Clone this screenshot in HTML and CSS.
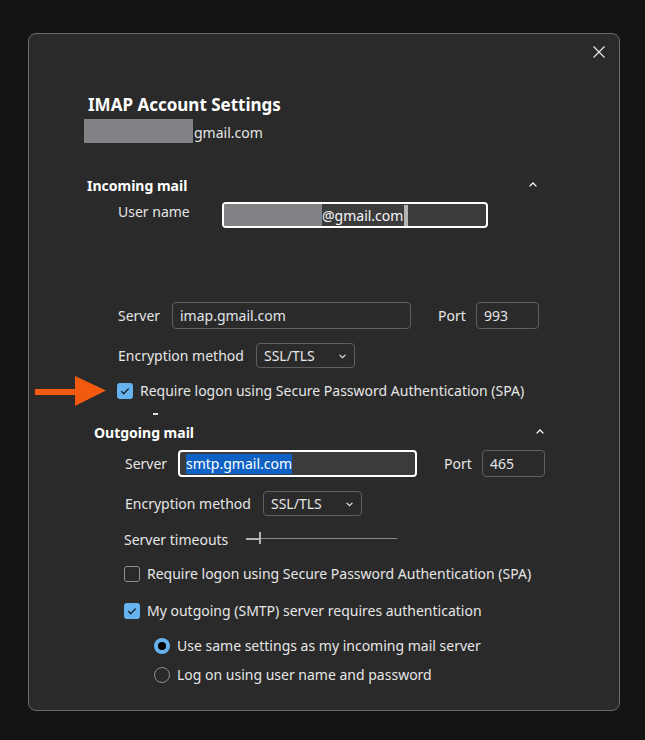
FILE: index.html
```html
<!DOCTYPE html>
<html lang="en">
<head>
<meta charset="utf-8">
<title>IMAP Account Settings</title>
<link rel="stylesheet" href="styles.css">
</head>
<body>
<div class="dialog">
  <div class="topbar">
    <svg class="close" width="12" height="12" viewBox="0 0 12 12"><path d="M0.5 0.5 L11.5 11.5 M11.5 0.5 L0.5 11.5" stroke="#e6e6e6" stroke-width="1.2" fill="none"/></svg>
  </div>

  <div class="head">
    <div class="title">IMAP Account Settings</div>
    <div class="account"><span class="redact account-redact"></span><span class="account-text">gmail.com</span></div>
  </div>

  <section class="section incoming">
    <div class="section-head">
      <span>Incoming mail</span>
      <svg class="chev-up" width="8" height="5" viewBox="0 0 8 5"><polyline points="0.6,4.4 4,1 7.4,4.4" stroke="#fff" stroke-width="1.3" fill="none"/></svg>
    </div>

    <div class="row row-user">
      <span class="label lbl-user">User name</span>
      <div class="field field-active field-user">
        <span class="redact user-redact"></span><span class="user-text">@gmail.com</span><span class="caret"></span>
      </div>
    </div>

    <div class="row row-server">
      <span class="label lbl-server">Server</span>
      <div class="field field-server">imap.gmail.com</div>
      <span class="label lbl-port">Port</span>
      <div class="field field-port">993</div>
    </div>

    <div class="row row-enc">
      <span class="label lbl-enc">Encryption method</span>
      <div class="select"><span>SSL/TLS</span><svg width="7" height="5" viewBox="0 0 7 5"><polyline points="0.6,0.8 3.5,3.7 6.4,0.8" stroke="#e6e6e6" stroke-width="1.2" fill="none"/></svg></div>
    </div>

    <div class="check-row spa-in">
      <svg class="arrow" width="72" height="31" viewBox="0 0 72 31"><rect x="0" y="13" width="42" height="6" fill="#f25a10"/><polygon points="40,0 71,14.5 40,30" fill="#f25a10"/></svg>
      <span class="checkbox checked"><svg width="16" height="16" viewBox="0 0 16 16"><polyline points="4.3,8.2 6.8,10.6 11.6,5.6" stroke="#111" stroke-width="1.2" fill="none"/></svg></span>
      <span>Require logon using Secure Password Authentication (SPA)</span>
    </div>
    <div class="dash"></div>
  </section>

  <section class="section outgoing">
    <div class="section-head">
      <span>Outgoing mail</span>
      <svg class="chev-up" width="8" height="5" viewBox="0 0 8 5"><polyline points="0.6,4.4 4,1 7.4,4.4" stroke="#fff" stroke-width="1.3" fill="none"/></svg>
    </div>

    <div class="row row-server2">
      <span class="label lbl-server2">Server</span>
      <div class="field field-active field-server2"><span class="selected">smtp.gmail.com</span></div>
      <span class="label lbl-port">Port</span>
      <div class="field field-port">465</div>
    </div>

    <div class="row row-enc">
      <span class="label lbl-enc2">Encryption method</span>
      <div class="select"><span>SSL/TLS</span><svg width="7" height="5" viewBox="0 0 7 5"><polyline points="0.6,0.8 3.5,3.7 6.4,0.8" stroke="#e6e6e6" stroke-width="1.2" fill="none"/></svg></div>
    </div>

    <div class="row row-timeout">
      <span class="label lbl-timeout">Server timeouts</span>
      <svg class="slider" width="151" height="12" viewBox="0 0 151 12"><rect x="0" y="6" width="13" height="2" fill="#b4b4b4"/><rect x="13" y="0" width="2" height="12" fill="#b4b4b4"/><rect x="15" y="6" width="136" height="1" fill="#8a8a8a"/></svg>
    </div>

    <div class="check-row spa-out">
      <span class="checkbox"></span>
      <span>Require logon using Secure Password Authentication (SPA)</span>
    </div>

    <div class="check-row smtp-auth">
      <span class="checkbox checked"><svg width="16" height="16" viewBox="0 0 16 16"><polyline points="4.3,8.2 6.8,10.6 11.6,5.6" stroke="#111" stroke-width="1.2" fill="none"/></svg></span>
      <span>My outgoing (SMTP) server requires authentication</span>
    </div>

    <div class="check-row radio-row radio-first">
      <span class="radio selected"><span class="dot"></span></span>
      <span>Use same settings as my incoming mail server</span>
    </div>

    <div class="check-row radio-row radio-second">
      <span class="radio"></span>
      <span>Log on using user name and password</span>
    </div>
  </section>
</div>
</body>
</html>
```

FILE: styles.css
```css
* { box-sizing: border-box; }

html, body { margin: 0; padding: 0; }

body {
  width: 645px;
  height: 740px;
  overflow: hidden;
  background: #141414;
  font-family: "Noto Sans", "Open Sans", sans-serif;
  font-size: 14px;
  line-height: 20px;
  color: #e6e6e6;
}

.dialog {
  position: relative;
  margin: 33px 0 0 28px;
  width: 592px;
  height: 678px;
  background: #2a2a2a;
  border: 1px solid #6a6a6a;
  border-radius: 8px;
  display: flex;
  flex-direction: column;
}

.topbar {
  display: flex;
  justify-content: flex-end;
  height: 24px;
  padding: 12px 14px 0 0;
}

.close { display: block; }

.head {
  margin-top: 35px;
  padding-left: 55px;
}

.title {
  padding-left: 4px;
  font-size: 17px;
  line-height: 24px;
  font-weight: 700;
  color: #ffffff;
}

.account {
  margin-top: 2px;
  display: flex;
  align-items: flex-start;
  height: 24px;
}

.redact { display: block; background: #818286; }

.account-redact { width: 109px; height: 24px; }

.account-text {
  margin-top: 4px;
  margin-left: 1px;
  color: #e6e6e6;
}

.section {
  width: 450px;
  display: flex;
  flex-direction: column;
}

.incoming { margin: 33px 0 0 58px; }
.outgoing { margin: 8px 0 0 65px; }

.section-head {
  display: flex;
  justify-content: space-between;
  align-items: center;
  height: 20px;
  font-weight: 700;
  color: #ffffff;
}

.chev-up { display: block; margin-bottom: 3px; }

.row {
  display: flex;
  align-items: center;
  padding-left: 31px;
}

.label { flex: none; white-space: nowrap; }

.field {
  flex: none;
  border: 1px solid #5e5e5e;
  border-radius: 4px;
  padding-left: 7px;
  line-height: 25px;
  height: 27px;
  color: #e4e6ea;
}

.field-active {
  border: 2px solid #ffffff;
  background: #3b3b3b;
  line-height: 23px;
}

/* user name */
.row-user { margin-top: 6px; align-items: flex-start; height: 26px; }
.lbl-user { width: 104px; }
.field-user {
  width: 266px;
  height: 26px;
  padding-left: 0;
  display: flex;
  align-items: center;
  overflow: hidden;
}
.user-redact { width: 98px; height: 22px; }
.user-text { color: #f4f6fa; line-height: 20px; margin-top: 2px; }
.caret { display: block; width: 4px; height: 21px; background: #b4b4b4; margin-left: 1px; }

/* server rows */
.row-server { margin-top: 74px; height: 27px; }
.lbl-server { width: 54px; }
.field-server { width: 239px; }
.lbl-port { margin-left: 27px; width: 38px; }
.field-port { width: 63px; padding-left: 7px; }

.row-server2 { margin-top: 7px; height: 27px; }
.lbl-server2 { width: 53px; }
.field-server2 { width: 239px; padding-left: 6px; display: flex; align-items: center; }
.selected { background: #0f62c4; color: #ffffff; line-height: 20px; }

/* encryption */
.row-enc { margin-top: 14px; height: 25px; }
.lbl-enc { width: 138px; }
.lbl-enc2 { width: 138px; }
.select {
  width: 99px;
  height: 25px;
  border: 1px solid #5e5e5e;
  border-radius: 4px;
  padding: 0 8px 0 7px;
  display: flex;
  justify-content: space-between;
  align-items: center;
}
.select svg { display: block; margin-top: 1px; }

/* timeouts */
.row-timeout { margin-top: 14px; height: 20px; padding-left: 30px; }
.lbl-timeout { width: 122px; }
.slider { display: block; margin-bottom: 4px; }

/* checks */
.check-row {
  position: relative;
  display: flex;
  align-items: center;
  gap: 7px;
  height: 20px;
  padding-left: 30px;
  white-space: nowrap;
}

.spa-in { margin-top: 13px; }
.spa-out { margin-top: 14px; }
.smtp-auth { margin-top: 17px; }
.radio-row { padding-left: 60px; }
.radio-first { margin-top: 15px; }
.radio-second { margin-top: 9px; }

.checkbox {
  flex: none;
  width: 16px;
  height: 16px;
  border: 1px solid #8e8e8e;
  border-radius: 3px;
}
.checkbox.checked { border: none; background: #65b2ef; }
.checkbox svg { display: block; }

.radio {
  flex: none;
  width: 16px;
  height: 16px;
  border: 1px solid #8e8e8e;
  border-radius: 50%;
  display: flex;
  align-items: center;
  justify-content: center;
}
.radio.selected { border: none; background: #65b2ef; }
.radio .dot { width: 8px; height: 8px; border-radius: 50%; background: #000; }

.arrow {
  position: absolute;
  left: -52px;
  top: -5px;
}

.dash {
  margin: 12px 0 0 66px;
  width: 5px;
  height: 2px;
  background: #e0e0e0;
}
```
